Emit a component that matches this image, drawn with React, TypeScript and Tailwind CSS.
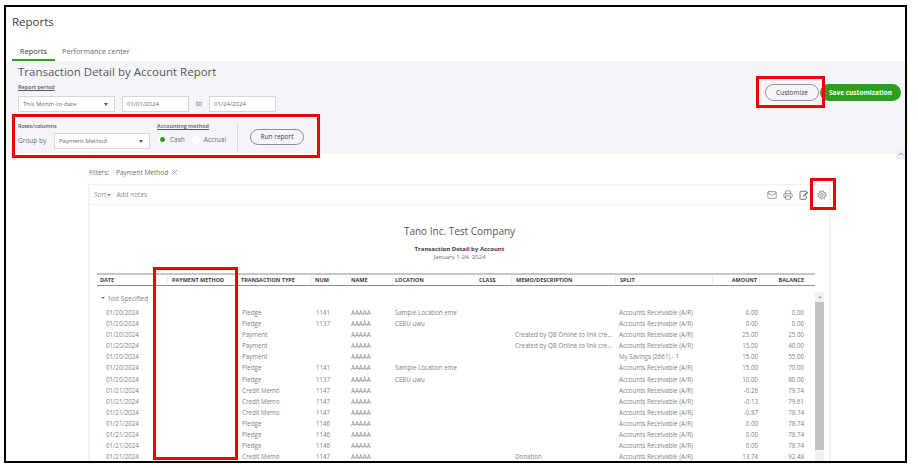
import { Mail, Printer, X, ChevronUp } from "lucide-react";

const columns = [
  { label: "DATE", w: "w-[71px]", pl: "pl-[3px]" },
  { label: "PAYMENT METHOD", w: "w-[69px]", pl: "pl-[4px]" },
  { label: "TRANSACTION TYPE", w: "w-[74px]", pl: "pl-[4px]" },
  { label: "NUM", w: "w-[36px]", pl: "pl-[4px]" },
  { label: "NAME", w: "w-[46px]", pl: "pl-[4px]" },
  { label: "LOCATION", w: "w-[82px]", pl: "pl-[2px]" },
  { label: "CLASS", w: "w-[37px]", pl: "pl-[4px]" },
  { label: "MEMO/DESCRIPTION", w: "w-[104px]", pl: "pl-[4px]" },
  { label: "SPLIT", w: "w-[97px]", pl: "pl-[4px]" },
];

const AR = "Accounts Receivable (A/R)";
const MEMO = "Created by QB Online to link cre...";

const rows = [
  ["01/20/2024", "Pledge", "1141", "Sample Location eme", "", AR, "0.00", "0.00"],
  ["01/20/2024", "Pledge", "1137", "CEBU uwu", "", AR, "0.00", "0.00"],
  ["01/20/2024", "Payment", "", "", MEMO, AR, "25.00", "25.00"],
  ["01/20/2024", "Payment", "", "", MEMO, AR, "15.00", "40.00"],
  ["01/20/2024", "Payment", "", "", "", "My Savings (2661) - 1", "15.00", "55.00"],
  ["01/20/2024", "Pledge", "1141", "Sample Location eme", "", AR, "15.00", "70.00"],
  ["01/20/2024", "Pledge", "1137", "CEBU uwu", "", AR, "10.00", "80.00"],
  ["01/21/2024", "Credit Memo", "1147", "", "", AR, "-0.26", "79.74"],
  ["01/21/2024", "Credit Memo", "1147", "", "", AR, "-0.13", "79.61"],
  ["01/21/2024", "Credit Memo", "1147", "", "", AR, "-0.87", "78.74"],
  ["01/21/2024", "Pledge", "1146", "", "", AR, "0.00", "78.74"],
  ["01/21/2024", "Pledge", "1146", "", "", AR, "0.00", "78.74"],
  ["01/21/2024", "Pledge", "1146", "", "", AR, "0.00", "78.74"],
  ["01/21/2024", "Credit Memo", "1147", "", "Donation", AR, "13.74", "92.48"],
];

function Field({ text, w, caret }: { text: string; w: string; caret?: boolean }) {
  return (
    <div className={`${w} h-[16px] bg-white border border-[#d4d7dc] flex items-center justify-between px-[4px] text-[6px] text-[#6b6c72]`}>
      <span>{text}</span>
      {caret && <span className="w-0 h-0 border-x-[2.5px] border-x-transparent border-t-[3px] border-t-[#555] mr-[2px]" />}
    </div>
  );
}

function RedBox({ className }: { className: string }) {
  return <div className={`absolute border-[3px] border-[#f00000] pointer-events-none ${className}`} />;
}

function ExportIcon() {
  return (
    <svg viewBox="0 0 12 12" className="w-[10px] h-[10px]" fill="none" stroke="currentColor" strokeWidth="1.1">
      <path d="M9 2.2V1.5H2a.8.8 0 0 0-.8.8v8a.8.8 0 0 0 .8.8h6a.8.8 0 0 0 .8-.8V7" />
      <path d="M5 8l.4-1.6L10 2l1.2 1.2L6.6 7.6z" fill="currentColor" stroke="none" />
    </svg>
  );
}

function GearIcon() {
  return (
    <svg viewBox="0 0 12 12" className="w-[10px] h-[10px]" fill="none" stroke="currentColor">
      <circle cx="6" cy="6" r="4" strokeWidth="0.9" />
      <circle cx="6" cy="6" r="5" strokeWidth="1.2" strokeDasharray="1.6 2.33" />
      <circle cx="6" cy="6" r="1.7" strokeWidth="0.9" />
    </svg>
  );
}

export default function App() {
  return (
    <div className="relative w-[918px] h-[468px] bg-white overflow-hidden font-['Open_Sans',sans-serif]">
      <div className="ml-[4px] mt-[5px] w-[903px] h-[458px] border-2 border-black overflow-hidden flex flex-col text-[#6b6c72]">
        {/* Page title and tabs */}
        <h1 className="h-[26px] pl-[6px] pt-[6px] text-[11.5px] leading-[18px] text-[#393a3d] font-medium shrink-0">Reports</h1>
        <div className="h-[28px] flex items-end pl-[6px] shrink-0">
          <div className="w-[43px] h-[21px] pt-[3px] text-center text-[7.5px] leading-[17px] text-[#393a3d] border-b-[2px] border-[#2ca01c]">Reports</div>
          <div className="ml-[7px] h-[21px] pt-[3px] text-[7.3px] leading-[17px] text-[#6b6c72]">Performance center</div>
        </div>

        {/* Report settings */}
        <div className="relative h-[93px] bg-[#f4f5f8] flex justify-between shrink-0">
          <div className="pl-[12px]">
            <h2 className="text-[11.5px] leading-[18px] pt-[2px] text-[#54565b]">Transaction Detail by Account Report</h2>
            <div className="mt-[3px] text-[5.5px] leading-[7px] font-semibold underline text-[#54565b]">Report period</div>
            <div className="mt-[5px] flex items-center">
              <Field text="This Month-to-date" w="w-[97px]" caret />
              <div className="ml-[7px]"><Field text="01/01/2024" w="w-[67px]" /></div>
              <span className="w-[20px] text-center text-[6.5px]">to</span>
              <Field text="01/24/2024" w="w-[67px]" />
            </div>
            <div className="mt-[11px] flex">
              <div>
                <div className="text-[5.5px] leading-[7px] font-semibold text-[#54565b]">Rows/columns</div>
                <div className="mt-[3px] flex items-center text-[6.5px]">
                  <span className="w-[36px]">Group by</span>
                  <Field text="Payment Method" w="w-[96px]" caret />
                </div>
              </div>
              <div className="ml-[7px]">
                <div className="text-[5.5px] leading-[7px] font-semibold underline text-[#54565b]">Accounting method</div>
                <div className="mt-[5px] flex items-center text-[6.5px]">
                  <span className="w-[8px] h-[8px] rounded-full bg-white flex items-center justify-center ml-[1px]">
                    <span className="w-[5px] h-[5px] rounded-full bg-[#2ca01c]" />
                  </span>
                  <span className="ml-[4px]">Cash</span>
                  <span className="ml-[7px] w-[8px] h-[8px] rounded-full bg-white" />
                  <span className="ml-[4px]">Accrual</span>
                </div>
              </div>
              <div className="ml-[11px] h-[28px] border-l border-[#d4d7dc] pl-[12px] flex items-center">
                <button className="w-[54px] h-[16px] rounded-full border border-[#8d9096] text-[6.5px] font-medium text-[#393a3d]">Run report</button>
              </div>
            </div>
          </div>
          <div className="flex items-start pt-[23px] pr-[4px] gap-[1px]">
            <button className="w-[54px] h-[17px] rounded-full border border-[#8d9096] text-[6.5px] font-medium text-[#393a3d]">Customize</button>
            <button className="w-[81px] h-[17px] rounded-full bg-[#2ca01c] text-[6.5px] font-bold text-white">Save customization</button>
          </div>
          <div className="absolute right-0 bottom-[-5px] w-[9px] h-[10px] bg-[#eef0f5] flex items-center justify-center">
            <ChevronUp className="w-[8px] h-[8px] text-[#5a6f9e]" />
          </div>
        </div>

        {/* Report body */}
        <div className="flex-1 min-h-0 pl-[82px] w-[825px]">
          <div className="h-[30px] flex items-center text-[6.5px] pl-[1px] pt-[7px]">
            <span>Filters:</span>
            <span className="ml-[7px]">Payment Method</span>
            <X className="w-[9px] h-[9px] ml-[2px]" strokeWidth={1.4} />
          </div>
          <div className="h-[279px] border-l-2 border-r-2 border-[#f1f3f8] overflow-hidden">
            <div className="h-[21px] border-y border-[#eef0f5] flex items-center justify-between px-[4px] text-[6.5px] text-[#8d9096]">
              <div className="flex items-center">
                <span>Sort</span>
                <span className="ml-[1px] w-0 h-0 border-x-[2px] border-x-transparent border-t-[2.5px] border-t-[#6b7fa8]" />
                <span className="ml-[5px]">Add notes</span>
              </div>
              <div className="flex items-center gap-[6px] text-[#5f6268] mr-[-2px]">
                <Mail className="w-[10px] h-[10px]" strokeWidth={1.5} />
                <Printer className="w-[10px] h-[10px]" strokeWidth={1.5} />
                <ExportIcon />
                <div className="ml-[2px] text-[#777a80]"><GearIcon /></div>
              </div>
            </div>

            <div className="text-center pt-[19px]">
              <div className="text-[10px] leading-[14px] text-[#54565b]">Tano Inc. Test Company</div>
              <div className="mt-[7px] text-[6px] leading-[8px] font-bold text-[#393a3d]">Transaction Detail by Account</div>
              <div className="text-[6px] leading-[9px]">January 1-24, 2024</div>
            </div>

            <div className="ml-[7px] w-[727px] flex flex-col mt-[11px]">
              <div className="w-[718px] h-[13px] border-t-2 border-b border-t-[#c4c6ca] border-b-[#8d9096] flex items-center text-[5.5px] font-bold text-[#393a3d] shrink-0">
                {columns.map((c) => (
                  <div key={c.label} className={`${c.w} ${c.pl} h-full flex items-center border-r border-[#eceef1] shrink-0`}>{c.label}</div>
                ))}
                <div className="w-[47px] h-full pr-[2px] flex items-center justify-end border-r border-[#eceef1] shrink-0">AMOUNT</div>
                <div className="flex-1 pr-[11px] text-right">BALANCE</div>
              </div>
              <div className="flex">
                <div className="w-[718px] text-[6.2px] text-[#7c7f85] shrink-0">
                  <div className="h-[21px] pt-[8px] pl-[4px] flex items-start text-[6.5px] leading-[9px]">
                    <span className="mt-[3px] w-0 h-0 border-x-[2px] border-x-transparent border-t-[2.5px] border-t-[#6b6c72]" />
                    <span className="ml-[3px]">Not Specified</span>
                  </div>
                  {rows.map((r, i) => (
                    <div key={i} className="h-[11.1px] leading-[11px] flex whitespace-nowrap">
                      <div className="w-[71px] pl-[9px] shrink-0">{r[0]}</div>
                      <div className="w-[69px] shrink-0" />
                      <div className="w-[74px] pl-[5px] shrink-0">{r[1]}</div>
                      <div className="w-[36px] pl-[5px] shrink-0">{r[2]}</div>
                      <div className="w-[46px] pl-[4px] shrink-0">AAAAA</div>
                      <div className="w-[82px] pl-[2px] shrink-0">{r[3]}</div>
                      <div className="w-[37px] shrink-0" />
                      <div className="w-[104px] pl-[3px] shrink-0">{r[4]}</div>
                      <div className="w-[97px] pl-[3px] shrink-0">{r[5]}</div>
                      <div className="w-[47px] pr-[2px] text-right shrink-0">{r[6]}</div>
                      <div className="flex-1 pr-[11px] text-right">{r[7]}</div>
                    </div>
                  ))}
                </div>
                <div className="w-[9px] bg-[#f1f1f1] flex flex-col items-center shrink-0 h-[175px] mt-[6px]">
                  <span className="mt-[4px] w-0 h-0 border-x-[2px] border-x-transparent border-b-[2.5px] border-b-[#a0a0a0]" />
                  <div className="mt-[4px] w-full h-[148px] bg-[#c1c1c1]" />
                </div>
              </div>
            </div>
          </div>
        </div>
      </div>

      {/* Red annotations */}
      <RedBox className="left-[756px] top-[76px] w-[69px] h-[32px]" />
      <RedBox className="left-[12px] top-[114px] w-[308px] h-[44px]" />
      <RedBox className="left-[810px] top-[178px] w-[26px] h-[32px]" />
      <RedBox className="left-[153px] top-[267px] w-[85px] h-[193px]" />
    </div>
  );
}
